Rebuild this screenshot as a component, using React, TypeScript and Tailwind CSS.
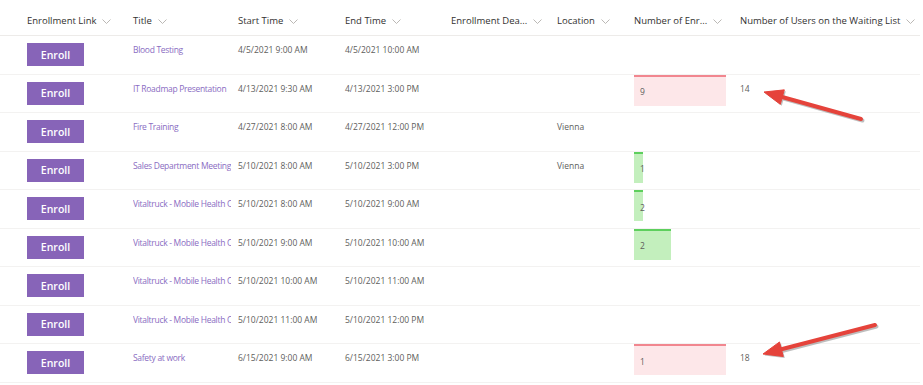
import React from "react";

type Bar = { value: number; width: number; tone: "red" | "green" };

type Row = {
  title: string;
  start: string;
  end: string;
  location?: string;
  bar?: Bar;
  waiting?: number;
};

const rows: Row[] = [
  { title: "Blood Testing", start: "4/5/2021 9:00 AM", end: "4/5/2021 10:00 AM" },
  { title: "IT Roadmap Presentation", start: "4/13/2021 9:30 AM", end: "4/13/2021 3:00 PM", bar: { value: 9, width: 92, tone: "red" }, waiting: 14 },
  { title: "Fire Training", start: "4/27/2021 8:00 AM", end: "4/27/2021 12:00 PM", location: "Vienna" },
  { title: "Sales Department Meeting", start: "5/10/2021 8:00 AM", end: "5/10/2021 3:00 PM", location: "Vienna", bar: { value: 1, width: 9, tone: "green" } },
  { title: "Vitaltruck - Mobile Health Check", start: "5/10/2021 8:00 AM", end: "5/10/2021 9:00 AM", bar: { value: 2, width: 9, tone: "green" } },
  { title: "Vitaltruck - Mobile Health Check", start: "5/10/2021 9:00 AM", end: "5/10/2021 10:00 AM", bar: { value: 2, width: 37, tone: "green" } },
  { title: "Vitaltruck - Mobile Health Check", start: "5/10/2021 10:00 AM", end: "5/10/2021 11:00 AM" },
  { title: "Vitaltruck - Mobile Health Check", start: "5/10/2021 11:00 AM", end: "5/10/2021 12:00 PM" },
  { title: "Safety at work", start: "6/15/2021 9:00 AM", end: "6/15/2021 3:00 PM", bar: { value: 1, width: 92, tone: "red" }, waiting: 18 },
];

const columns = [
  { label: "Enrollment Link", w: "w-[106px]" },
  { label: "Title", w: "w-[105px]" },
  { label: "Start Time", w: "w-[107px]" },
  { label: "End Time", w: "w-[106px]" },
  { label: "Enrollment Dea...", w: "w-[106px]" },
  { label: "Location", w: "w-[77px]" },
  { label: "Number of Enr...", w: "w-[106px]" },
  { label: "Number of Users on the Waiting List", w: "flex-1" },
];

function Chevron() {
  return (
    <svg width="9" height="5" viewBox="0 0 9 5" className="ml-[6px] shrink-0" fill="none">
      <path d="M0.5 0.5 L4.5 4.5 L8.5 0.5" stroke="#b3b0ad" strokeWidth="0.9" />
    </svg>
  );
}

function Arrow({ x1, y1, x2, y2 }: { x1: number; y1: number; x2: number; y2: number }) {
  const ang = Math.atan2(y2 - y1, x2 - x1);
  const len = 19;
  const half = 7.5;
  const bx = x2 - Math.cos(ang) * len;
  const by = y2 - Math.sin(ang) * len;
  const px = -Math.sin(ang) * half;
  const py = Math.cos(ang) * half;
  const pts = `${x2},${y2} ${bx + px},${by + py} ${bx - px},${by - py}`;
  const sx = x2 - Math.cos(ang) * (len - 3);
  const sy = y2 - Math.sin(ang) * (len - 3);
  return (
    <g>
      <g transform="translate(1.5 1.5)" opacity="0.25">
        <line x1={x1} y1={y1} x2={sx} y2={sy} stroke="#000" strokeWidth="4" strokeLinecap="round" />
        <polygon points={pts} fill="#000" />
      </g>
      <line x1={x1} y1={y1} x2={sx} y2={sy} stroke="#e5433b" strokeWidth="4" strokeLinecap="round" />
      <polygon points={pts} fill="#e5433b" strokeLinejoin="round" stroke="#e5433b" strokeWidth="1" />
    </g>
  );
}

export default function App() {
  return (
    <div className="relative w-[923px] h-[385px] overflow-hidden bg-white font-['Open_Sans',sans-serif]">
      <div className="pr-[3px]">
        {/* header */}
        <div className="flex items-start h-[36px] pt-[15px] border-b border-[#edebe9] pl-[27px] text-[9.5px] leading-[12px] text-[#323130]">
          {columns.map((c) => (
            <div key={c.label} className={`${c.w} flex items-center shrink-0 whitespace-nowrap`}>
              <span>{c.label}</span>
              <Chevron />
            </div>
          ))}
        </div>

        {rows.map((r, i) => (
          <div key={i} className="flex h-[38.5px] border-b border-[#f3f2f1] pl-[27px] text-[8.5px] leading-[12px] text-[#605e5c]">
            <div className="w-[106px] shrink-0 pt-[7px]">
              <div className="w-[57px] h-[23px] bg-[#8764b8] text-white text-[10.5px] font-semibold flex items-center justify-center">
                Enroll
              </div>
            </div>
            <div className="w-[105px] shrink-0 pt-[8px]">
              <div className="w-[98px] overflow-hidden whitespace-nowrap tracking-[-0.3px] text-[#8a6cc2]">{r.title}</div>
            </div>
            <div className="w-[107px] shrink-0 pt-[8px] whitespace-nowrap">{r.start}</div>
            <div className="w-[106px] shrink-0 pt-[8px] whitespace-nowrap">{r.end}</div>
            <div className="w-[106px] shrink-0" />
            <div className="w-[77px] shrink-0 pt-[8px]">{r.location}</div>
            <div className="w-[106px] shrink-0">
              {r.bar && (
                <div
                  className={`h-[31px] flex items-center pl-[6px] pt-[2px] border-t-2 ${
                    r.bar.tone === "red" ? "bg-[#fde7e9] border-[#f1868f]" : "bg-[#c3efbd] border-[#5dcf5d]"
                  }`}
                  style={{ width: r.bar.width }}
                >
                  {r.bar.value}
                </div>
              )}
            </div>
            <div className="flex-1 pt-[8px]">{r.waiting}</div>
          </div>
        ))}
      </div>

      <svg className="absolute inset-0 pointer-events-none" width="923" height="385">
        <Arrow x1={861} y1={119} x2={764} y2={92} />
        <Arrow x1={875} y1={325} x2={763} y2={354} />
      </svg>
    </div>
  );
}
